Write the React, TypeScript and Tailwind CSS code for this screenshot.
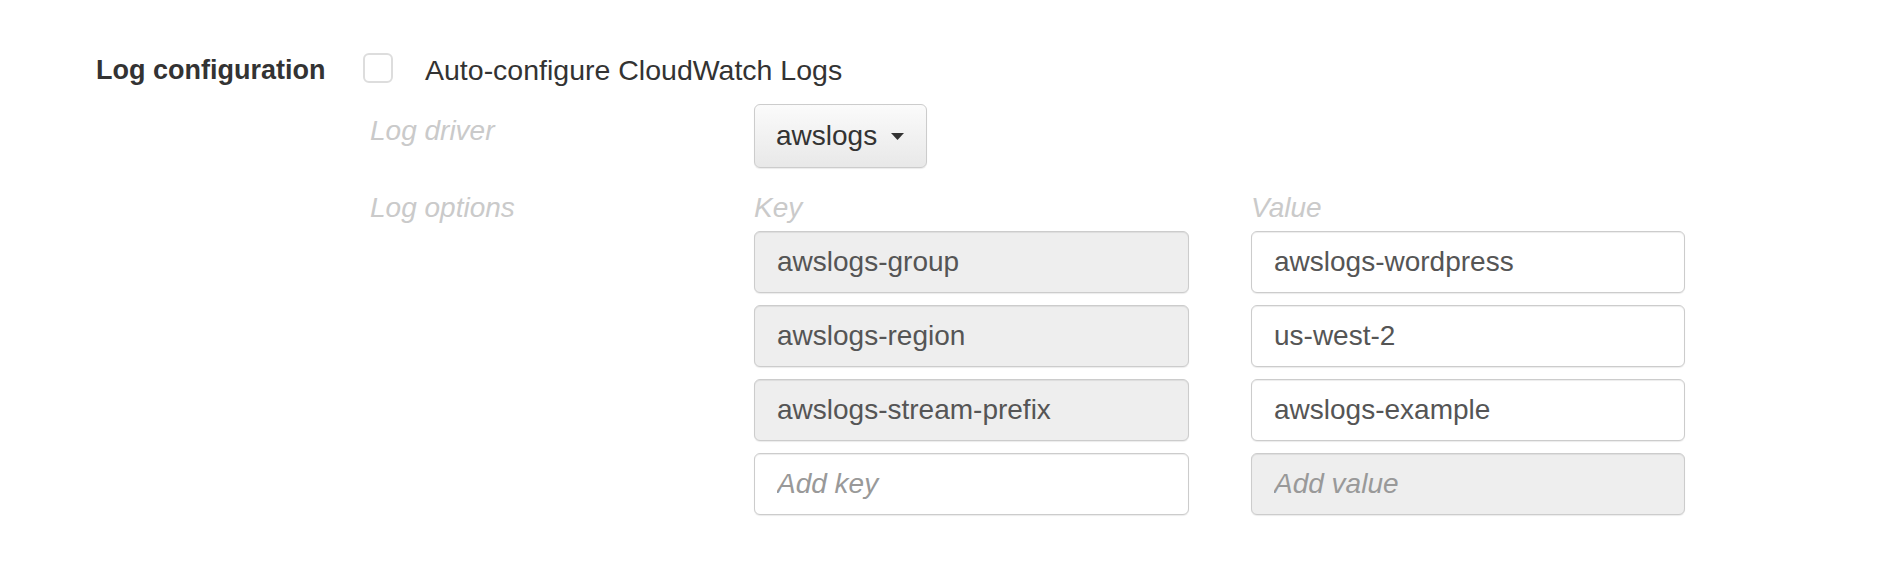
import { useState } from "react";

interface LogOption {
  key: string;
  value: string;
}

const options: LogOption[] = [
  { key: "awslogs-group", value: "awslogs-wordpress" },
  { key: "awslogs-region", value: "us-west-2" },
  { key: "awslogs-stream-prefix", value: "awslogs-example" },
];

const inputBase =
  "w-full h-[62px] px-[22px] rounded-[6px] border border-[#cccccc] text-[28px] text-[#555555] outline-none shadow-[inset_0_1px_1px_rgba(0,0,0,0.075),0_1px_1px_rgba(0,0,0,0.08)] placeholder:italic placeholder:text-[#999999]";

export default function App() {
  const [autoConfig, setAutoConfig] = useState(false);

  return (
    <div className="min-h-screen bg-white pl-[96px] pt-[50px] font-['Liberation_Sans',Arial,sans-serif] text-[#333333]">
      {/* header row */}
      <div className="flex items-start">
        <div className="w-[267px] text-[27px] leading-[40px] font-bold">Log configuration</div>
        <button
          onClick={() => setAutoConfig(!autoConfig)}
          className="mt-[3px] w-[30px] h-[30px] rounded-[6px] border-2 border-[#dddddd] bg-white flex items-center justify-center"
        >
          {autoConfig && <span className="w-[14px] h-[14px] bg-[#555] rounded-[2px]" />}
        </button>
        <span className="ml-[32px] text-[28.5px] leading-[40px]">Auto-configure CloudWatch Logs</span>
      </div>

      <div className="ml-[274px]">
        {/* log driver */}
        <div className="mt-[14px] flex items-start">
          <div className="w-[384px] pt-[7px] text-[28px] leading-[40px] italic text-[#cacaca]">Log driver</div>
          <button className="h-[64px] pl-[21px] pr-[22px] flex items-center gap-[14px] rounded-[6px] border border-[#cccccc] bg-gradient-to-b from-[#fbfbfb] to-[#e8e8e8] text-[28px] text-[#333333] shadow-[0_1px_1px_rgba(0,0,0,0.08)]">
            awslogs
            <svg width="13" height="7" viewBox="0 0 13 7">
              <path d="M0 0h13L6.5 7z" fill="#333333" />
            </svg>
          </button>
        </div>

        {/* log options */}
        <div className="mt-[20px] flex items-start">
          <div className="w-[384px] text-[28px] leading-[40px] italic text-[#cacaca]">Log options</div>
          <div className="grid grid-cols-[435px_434px] gap-x-[62px] gap-y-[12px]">
            <div className="text-[28px] leading-[40px] italic text-[#cacaca] -mb-[9px]">Key</div>
            <div className="text-[28px] leading-[40px] italic text-[#cacaca] -mb-[9px]">Value</div>
            {options.map((o) => (
              <div key={o.key} className="contents">
                <input readOnly disabled value={o.key} className={`${inputBase} bg-[#eeeeee]`} />
                <input readOnly value={o.value} className={`${inputBase} bg-white`} />
              </div>
            ))}
            <input placeholder="Add key" className={`${inputBase} bg-white`} />
            <input disabled placeholder="Add value" className={`${inputBase} bg-[#eeeeee]`} />
          </div>
        </div>
      </div>
    </div>
  );
}
